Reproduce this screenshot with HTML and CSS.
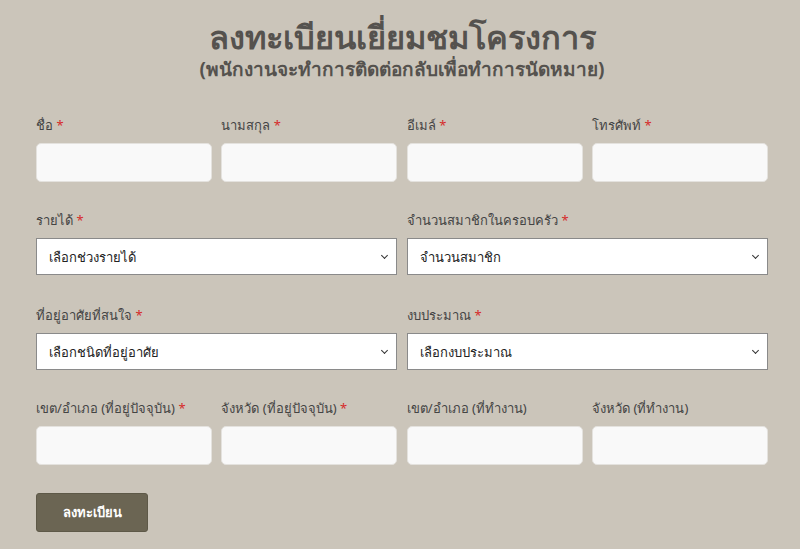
FILE: index.html
```html
<!DOCTYPE html>
<html lang="th">
<head>
    <meta charset="UTF-8">
    <meta name="viewport" content="width=device-width, initial-scale=1.0">
    <title>ลงทะเบียนเยี่ยมชมโครงการ</title>
    <link rel="stylesheet" href="styles.css">
</head>
<body>
    <div class="register-form">
        <h1>ลงทะเบียนเยี่ยมชมโครงการ</h1>
        <h2>(พนักงานจะทำการติดต่อกลับเพื่อทำการนัดหมาย)</h2>

        <form>
            <div class="form-row cols-4">
                <div class="field">
                    <label>ชื่อ <span class="req">*</span></label>
                    <input type="text">
                </div>
                <div class="field">
                    <label>นามสกุล <span class="req">*</span></label>
                    <input type="text">
                </div>
                <div class="field">
                    <label>อีเมล์ <span class="req">*</span></label>
                    <input type="text">
                </div>
                <div class="field">
                    <label>โทรศัพท์ <span class="req">*</span></label>
                    <input type="text">
                </div>
            </div>

            <div class="form-row cols-2 wide-gap">
                <div class="field">
                    <label>รายได้ <span class="req">*</span></label>
                    <div class="select-wrap">
                        <select><option>เลือกช่วงรายได้</option></select>
                    </div>
                </div>
                <div class="field">
                    <label>จำนวนสมาชิกในครอบครัว <span class="req">*</span></label>
                    <div class="select-wrap">
                        <select><option>จำนวนสมาชิก</option></select>
                    </div>
                </div>
            </div>

            <div class="form-row cols-2">
                <div class="field">
                    <label>ที่อยู่อาศัยที่สนใจ <span class="req">*</span></label>
                    <div class="select-wrap">
                        <select><option>เลือกชนิดที่อยู่อาศัย</option></select>
                    </div>
                </div>
                <div class="field">
                    <label>งบประมาณ <span class="req">*</span></label>
                    <div class="select-wrap">
                        <select><option>เลือกงบประมาณ</option></select>
                    </div>
                </div>
            </div>

            <div class="form-row cols-4">
                <div class="field">
                    <label>เขต/อำเภอ (ที่อยู่ปัจจุบัน) <span class="req">*</span></label>
                    <input type="text">
                </div>
                <div class="field">
                    <label>จังหวัด (ที่อยู่ปัจจุบัน) <span class="req">*</span></label>
                    <input type="text">
                </div>
                <div class="field">
                    <label>เขต/อำเภอ (ที่ทำงาน)</label>
                    <input type="text">
                </div>
                <div class="field">
                    <label>จังหวัด (ที่ทำงาน)</label>
                    <input type="text">
                </div>
            </div>

            <button type="button" class="submit-button">ลงทะเบียน</button>
        </form>
    </div>
</body>
</html>
```

FILE: styles.css
```css
body {
    font-family: "Noto Sans", sans-serif;
    margin: 0;
    padding: 0;
    background-color: #cbc5ba;
}

.register-form {
    width: 732px;
    margin: 0 32px 0 36px;
    padding-top: 16px;
}

h1 {
    margin: 0;
    text-align: center;
    font-size: 32.6px;
    line-height: 42px;
    font-weight: 700;
    color: #55524e;
}

h2 {
    margin: 0;
    text-align: center;
    font-size: 19px;
    line-height: 22px;
    font-weight: 700;
    color: #55524e;
}

form {
    margin-top: 35px;
}

.form-row {
    display: grid;
    margin-bottom: 28px;
}

.form-row.wide-gap {
    margin-bottom: 30px;
}

.cols-4 {
    grid-template-columns: repeat(4, 1fr);
    column-gap: 9.5px;
}

.cols-2 {
    grid-template-columns: repeat(2, 1fr);
    column-gap: 10px;
}

.field label {
    display: block;
    font-size: 13px;
    line-height: 20px;
    color: #444;
    margin-bottom: 8px;
}

.req {
    color: #d62b2b;
}

.field input {
    display: block;
    box-sizing: border-box;
    width: 100%;
    height: 39px;
    border: 1px solid #e4e2de;
    border-radius: 5px;
    background-color: #f9f9f9;
}

.select-wrap {
    position: relative;
}

/* thin chevron like the native one in the screenshot */
.select-wrap::after {
    content: "";
    position: absolute;
    right: 10px;
    top: 15px;
    width: 4px;
    height: 4px;
    border-right: 1.3px solid #333;
    border-bottom: 1.3px solid #333;
    transform: rotate(45deg);
    pointer-events: none;
}

.field select {
    display: block;
    box-sizing: border-box;
    width: 100%;
    height: 37px;
    padding: 0 12px;
    border: 1px solid #8a8a8a;
    border-radius: 0;
    background-color: #fff;
    appearance: none;
    -webkit-appearance: none;
    font-family: "Noto Sans", sans-serif;
    font-size: 13px;
    color: #222;
}

.submit-button {
    width: 112px;
    height: 39px;
    background-color: #6b6553;
    color: #fff;
    border: 1px solid #5e5948;
    border-radius: 3px;
    font-family: "Noto Sans", sans-serif;
    font-size: 13px;
    font-weight: 700;
    cursor: pointer;
}
```
